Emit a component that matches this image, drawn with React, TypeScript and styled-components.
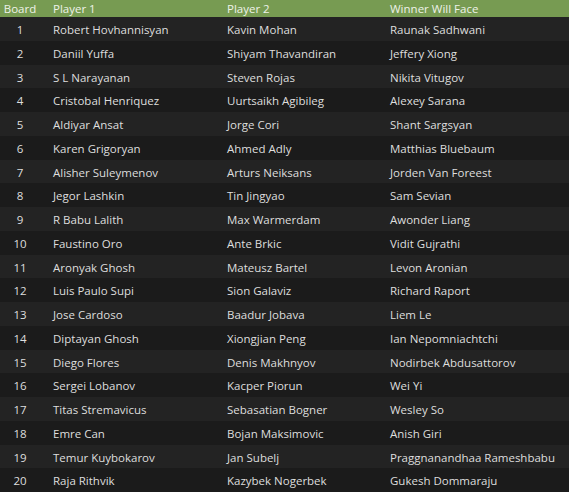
import React from "react";
import styled, { createGlobalStyle } from "styled-components";

const Global = createGlobalStyle`
  html, body { margin: 0; padding: 0; background: #1c1c1c; }
  body { font-family: "Segoe UI", "Open Sans", "Noto Sans", sans-serif; }
`;

const rows: [string, string, string][] = [
  ["Robert Hovhannisyan", "Kavin Mohan", "Raunak Sadhwani"],
  ["Daniil Yuffa", "Shiyam Thavandiran", "Jeffery Xiong"],
  ["S L Narayanan", "Steven Rojas", "Nikita Vitugov"],
  ["Cristobal Henriquez", "Uurtsaikh Agibileg", "Alexey Sarana"],
  ["Aldiyar Ansat", "Jorge Cori", "Shant Sargsyan"],
  ["Karen Grigoryan", "Ahmed Adly", "Matthias Bluebaum"],
  ["Alisher Suleymenov", "Arturs Neiksans", "Jorden Van Foreest"],
  ["Jegor Lashkin", "Tin Jingyao", "Sam Sevian"],
  ["R Babu Lalith", "Max Warmerdam", "Awonder Liang"],
  ["Faustino Oro", "Ante Brkic", "Vidit Gujrathi"],
  ["Aronyak Ghosh", "Mateusz Bartel", "Levon Aronian"],
  ["Luis Paulo Supi", "Sion Galaviz", "Richard Raport"],
  ["Jose Cardoso", "Baadur Jobava", "Liem Le"],
  ["Diptayan Ghosh", "Xiongjian Peng", "Ian Nepomniachtchi"],
  ["Diego Flores", "Denis Makhnyov", "Nodirbek Abdusattorov"],
  ["Sergei Lobanov", "Kacper Piorun", "Wei Yi"],
  ["Titas Stremavicus", "Sebasatian Bogner", "Wesley So"],
  ["Emre Can", "Bojan Maksimovic", "Anish Giri"],
  ["Temur Kuybokarov", "Jan Subelj", "Praggnanandhaa Rameshbabu"],
  ["Raja Rithvik", "Kazybek Nogerbek", "Gukesh Dommaraju"],
];

const Table = styled.div`
  width: 569px;
  display: grid;
  grid-template-columns: 40px 174px 163px 1fr;
  font-size: 11.5px;
  color: #dedede;
`;

const HeaderRow = styled.div`
  display: contents;
`;

const HeadCell = styled.div<{ $center?: boolean }>`
  background: #779b52;
  height: 17px;
  box-sizing: border-box;
  padding-top: 1px;
  line-height: 16px;
  color: #eef2e8;
  padding-left: ${(p) => (p.$center ? "0" : "13px")};
  text-align: ${(p) => (p.$center ? "center" : "left")};
  white-space: nowrap;
`;

const Row = styled.div`
  display: contents;
`;

const Cell = styled.div<{ $odd: boolean; $center?: boolean }>`
  background: ${(p) => (p.$odd ? "#232323" : "#1b1b1b")};
  height: 23.75px;
  box-sizing: border-box;
  padding-top: 2px;
  line-height: 22px;
  padding-left: ${(p) => (p.$center ? "0" : "13px")};
  text-align: ${(p) => (p.$center ? "center" : "left")};
  white-space: nowrap;
  overflow: hidden;
`;

export default function App() {
  return (
    <>
      <Global />
      <Table>
        <HeaderRow>
          <HeadCell $center>Board</HeadCell>
          <HeadCell>Player 1</HeadCell>
          <HeadCell>Player 2</HeadCell>
          <HeadCell>Winner Will Face</HeadCell>
        </HeaderRow>
        {rows.map((r, i) => {
          const odd = i % 2 === 0;
          return (
            <Row key={i}>
              <Cell $odd={odd} $center>{i + 1}</Cell>
              <Cell $odd={odd}>{r[0]}</Cell>
              <Cell $odd={odd}>{r[1]}</Cell>
              <Cell $odd={odd}>{r[2]}</Cell>
            </Row>
          );
        })}
      </Table>
    </>
  );
}
